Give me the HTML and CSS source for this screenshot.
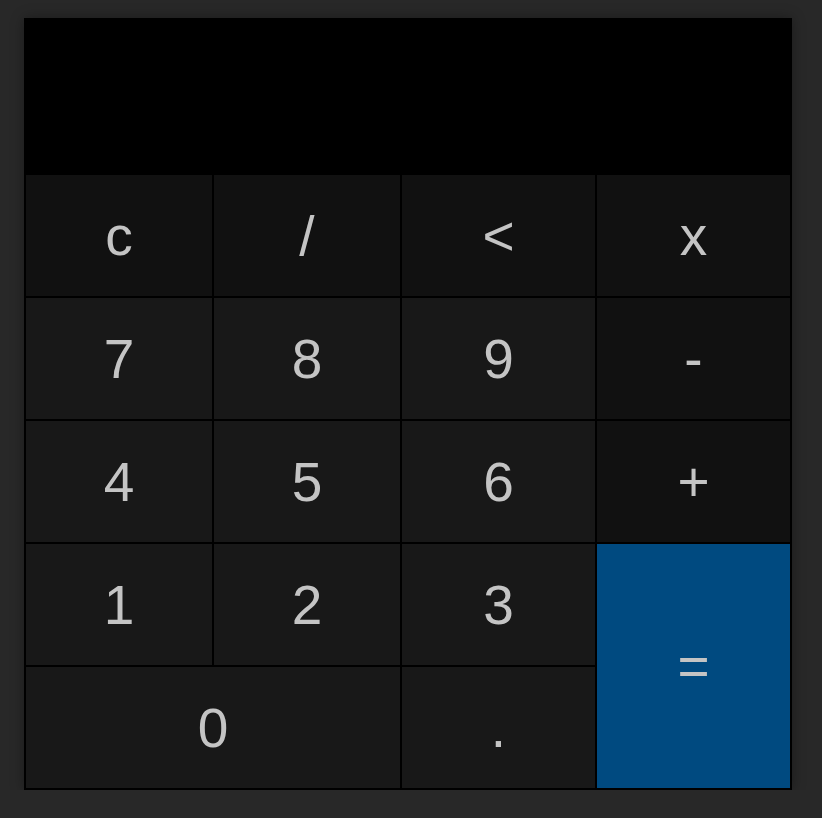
FILE: index.html
```html
<!DOCTYPE html>
<html>
<head>
<meta charset="utf-8">
<link rel="stylesheet" href="styles.css">
</head>
<body>
<div class="calc">
  <div class="display"></div>
  <div class="keys">
    <div class="key op">c</div>
    <div class="key op">/</div>
    <div class="key op">&lt;</div>
    <div class="key op">x</div>
    <div class="key">7</div>
    <div class="key">8</div>
    <div class="key">9</div>
    <div class="key op">-</div>
    <div class="key">4</div>
    <div class="key">5</div>
    <div class="key">6</div>
    <div class="key op">+</div>
    <div class="key">1</div>
    <div class="key">2</div>
    <div class="key">3</div>
    <div class="key eq">=</div>
    <div class="key zero">0</div>
    <div class="key">.</div>
  </div>
</div>
</body>
</html>
```
FILE: styles.css
```css
html, body {
  margin: 0;
  padding: 0;
  background: #282828;
}
body {
  padding: 18px 0 0 24px;
  font-family: "Liberation Sans", Arial, sans-serif;
}
.calc {
  width: 766px;
  border: 1px solid #000;
  background: #000;
  box-shadow: 0 0 12px rgba(0, 0, 0, 0.35);
}
.display {
  height: 155px;
  background: #000;
}
.keys {
  display: grid;
  grid-template-columns: 188px 188px 195px 195px;
  grid-auto-rows: 123px;
}
.key {
  box-sizing: border-box;
  border: 1px solid #000;
  background: #181818;
  color: #c4c4c4;
  font-size: 55px;
  display: flex;
  align-items: center;
  justify-content: center;
}
.key.op {
  background: #111111;
}
.key.eq {
  grid-column: 4;
  grid-row: 4 / span 2;
  background: #004a80;
}
.key.zero {
  grid-column: 1 / span 2;
}
```
